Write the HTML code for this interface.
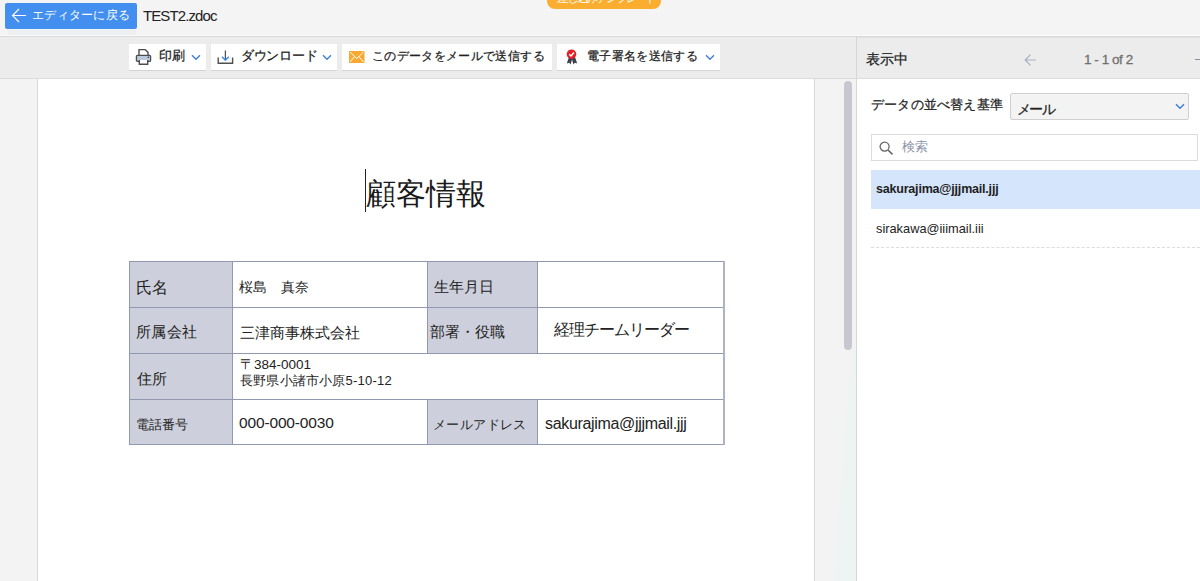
<!DOCTYPE html>
<html lang="ja"><head><meta charset="utf-8">
<style>
*{box-sizing:border-box;margin:0;padding:0}
html,body{width:1200px;height:581px;overflow:hidden;background:#f4f4f4;font-family:"Liberation Sans",sans-serif;color:#222}
div,span,svg{position:absolute}
.tx{white-space:nowrap;line-height:1}
.bd{-webkit-text-stroke:0.25px #222}
.btn{top:44px;height:26px;background:#fff;box-shadow:0 1px 0 rgba(0,0,0,.10)}
.hl{background:#9298b0}
</style></head><body>
<!-- top bar -->
<div style="left:0;top:0;width:1200px;height:36px;background:#f4f4f4"></div>
<div style="left:0;top:35px;width:1200px;height:1px;background:#fafafa"></div><div style="left:0;top:36px;width:1200px;height:1px;background:#dadada"></div>
<div style="left:5px;top:3px;width:132px;height:26px;background:#428ff0;border-radius:2px"></div>
<div style="left:8px;top:30px;width:128px;height:5px;background:#edf0f2"></div>
<svg style="left:11px;top:8px" width="16" height="15" viewBox="0 0 16 15"><path d="M8 1 L1.5 7.5 L8 14 M1.5 7.5 H15" fill="none" stroke="#fff" stroke-width="1.15"/></svg>
<div class="tx" style="left:32px;top:9px;font-size:12px;letter-spacing:0.3px;color:#fff">エディターに戻る</div>
<div class="tx" style="left:143px;top:8px;font-size:15px;letter-spacing:-0.9px;color:#222">TEST2.zdoc</div>
<div style="left:547px;top:-12px;width:114px;height:21px;background:#fbad2f;border-radius:0 0 8px 8px;overflow:hidden"><div class="tx" style="left:10px;top:4px;font-size:12px;letter-spacing:-2.2px;color:#fff7e6">差し込みテンプレート</div></div>

<!-- toolbar -->
<div style="left:0;top:37px;width:856px;height:41px;background:#ececec"></div>
<div style="left:0;top:78px;width:856px;height:1px;background:#dcdcdc"></div>
<div class="btn" style="left:129px;width:77px"></div>
<div class="btn" style="left:211px;width:126px"></div>
<div class="btn" style="left:342px;width:210px"></div>
<div class="btn" style="left:557px;width:163px"></div>
<svg style="left:135px;top:48px" width="17" height="18" viewBox="0 0 17 18"><path d="M4 7 V1.6 H10.2 L13 4.4 V7" fill="#fff" stroke="#4d4d4d" stroke-width="1.4"/><rect x="1.4" y="7.4" width="14.2" height="6" rx="1" fill="#b9c8da" stroke="#4d4d4d" stroke-width="1.25"/><path d="M4.3 12 V16.3 H12.7 V12" fill="#fff" stroke="#4d4d4d" stroke-width="1.4"/><circle cx="13.3" cy="9.3" r="0.8" fill="#333"/></svg>
<div class="tx bd" style="left:159px;top:50px;font-size:12.5px">印刷</div>
<svg style="left:191px;top:54px" width="10" height="7" viewBox="0 0 10 7"><path d="M1 1.2 L5 5.2 L9 1.2" fill="none" stroke="#3d7fd9" stroke-width="1.4"/></svg>
<svg style="left:217px;top:50px" width="17" height="15" viewBox="0 0 17 15"><path d="M1.2 7.5 V13.3 H15.6 V7.5" fill="none" stroke="#505050" stroke-width="1.4"/><path d="M8.4 0.5 V10" stroke="#555" stroke-width="1.3"/><path d="M5 6.8 L8.4 10.2 L11.8 6.8" fill="none" stroke="#3a8af2" stroke-width="1.5"/></svg>
<div class="tx bd" style="left:241px;top:50px;font-size:12.5px;letter-spacing:-0.3px">ダウンロード</div>
<svg style="left:322px;top:54px" width="10" height="7" viewBox="0 0 10 7"><path d="M1 1.2 L5 5.2 L9 1.2" fill="none" stroke="#3d7fd9" stroke-width="1.4"/></svg>
<svg style="left:349px;top:51px" width="16" height="12" viewBox="0 0 16 12"><rect x="0" y="0" width="15.5" height="12" fill="#f9a830"/><path d="M1 1 L7.75 7.5 L14.5 1 M1 11 L5.6 5.5 M14.5 11 L9.9 5.5" fill="none" stroke="#fff" stroke-width="1"/></svg>
<div class="tx bd" style="left:372px;top:50px;font-size:12px;letter-spacing:0.35px">このデータをメールで送信する</div>
<svg style="left:565px;top:49px" width="14" height="16" viewBox="0 0 14 16"><path d="M4 8 L1.8 14.5 L4.2 13.8 L5.6 15.5 L7 10.5 L8.4 15.5 L9.8 13.8 L12.2 14.5 L10 8 Z" fill="#3b404c"/><circle cx="6.5" cy="5.2" r="4.8" fill="#e0232b"/><path d="M4.2 5.3 L6 7 L9 3.6" fill="none" stroke="#fff" stroke-width="1.5"/></svg>
<div class="tx bd" style="left:587px;top:50px;font-size:12px;letter-spacing:0.35px">電子署名を送信する</div>
<svg style="left:705px;top:54px" width="10" height="7" viewBox="0 0 10 7"><path d="M1 1.2 L5 5.2 L9 1.2" fill="none" stroke="#3d7fd9" stroke-width="1.4"/></svg>

<!-- document area -->
<div style="left:0;top:79px;width:37px;height:502px;background:#f3f3f3"></div>
<div style="left:37px;top:79px;width:1px;height:502px;background:#d9d9d9"></div>
<div style="left:38px;top:79px;width:776px;height:502px;background:#fff"></div>
<div style="left:814px;top:79px;width:1px;height:502px;background:#d9d9d9"></div>
<div style="left:815px;top:79px;width:41px;height:502px;background:#f3f3f3"></div>
<svg style="left:815px;top:79px" width="41" height="502" viewBox="0 0 41 502"><polygon points="37,270 41,270 41,502 19,502" fill="#eef3f4"/></svg><div style="left:844px;top:81px;width:8px;height:269px;background:#c6c7cf;border-radius:4px"></div>

<div style="left:365px;top:169px;width:1px;height:43px;background:#222"></div>
<div class="tx" style="left:366px;top:179px;font-size:29.5px;color:#1a1a1a">顧客情報</div>

<!-- table -->
<div style="left:129px;top:261px;width:104px;height:184px;background:#cdd0dc"></div>
<div style="left:427px;top:261px;width:111px;height:93px;background:#cdd0dc"></div>
<div style="left:427px;top:399px;width:111px;height:46px;background:#cdd0dc"></div>
<div class="hl" style="left:129px;top:261px;width:596px;height:1px"></div>
<div class="hl" style="left:129px;top:307px;width:596px;height:1px"></div>
<div class="hl" style="left:129px;top:353px;width:596px;height:1px"></div>
<div class="hl" style="left:129px;top:399px;width:596px;height:1px"></div>
<div class="hl" style="left:129px;top:444px;width:596px;height:1px"></div>
<div class="hl" style="left:129px;top:261px;width:1px;height:184px"></div>
<div class="hl" style="left:232px;top:261px;width:1px;height:184px"></div>
<div class="hl" style="left:427px;top:261px;width:1px;height:93px"></div>
<div class="hl" style="left:427px;top:399px;width:1px;height:46px"></div>
<div class="hl" style="left:537px;top:261px;width:1px;height:93px"></div>
<div class="hl" style="left:537px;top:399px;width:1px;height:46px"></div>
<div style="left:723px;top:261px;width:2px;height:184px;background:#aeb2c5"></div>

<div class="tx" style="left:136px;top:280px;font-size:16px">氏名</div>
<div class="tx" style="left:239px;top:281px;font-size:13.5px">桜島　真奈</div>
<div class="tx" style="left:434px;top:279px;font-size:15.3px">生年月日</div>
<div class="tx" style="left:136px;top:324px;font-size:15.3px;letter-spacing:0.3px">所属会社</div>
<div class="tx" style="left:240px;top:325px;font-size:15px">三津商事株式会社</div>
<div class="tx" style="left:430px;top:324px;font-size:15px">部署・役職</div>
<div class="tx" style="left:554px;top:322px;font-size:16px;letter-spacing:-1.05px">経理チームリーダー</div>
<div class="tx" style="left:137px;top:371px;font-size:15.3px">住所</div>
<div class="tx" style="left:240px;top:358px;font-size:13.5px">〒384-0001</div>
<div class="tx" style="left:240px;top:374px;font-size:13px;letter-spacing:0.2px">長野県小諸市小原5-10-12</div>
<div class="tx" style="left:136px;top:418px;font-size:13px">電話番号</div>
<div class="tx" style="left:239px;top:415px;font-size:15.5px;letter-spacing:-0.15px">000-000-0030</div>
<div class="tx" style="left:433px;top:418px;font-size:13.4px;letter-spacing:0.4px">メールアドレス</div>
<div class="tx" style="left:545px;top:416px;font-size:16px;letter-spacing:-0.33px">sakurajima@jjjmail.jjj</div>

<!-- right panel -->
<div style="left:856px;top:37px;width:1px;height:544px;background:#d6d6d6"></div>
<div style="left:857px;top:37px;width:343px;height:41px;background:#ececec;border-top:1px solid #e0e0e0"></div>
<div style="left:857px;top:78px;width:343px;height:1px;background:#dcdcdc"></div>
<div style="left:857px;top:79px;width:343px;height:502px;background:#fff"></div>
<div class="tx bd" style="left:866px;top:52px;font-size:14px">表示中</div>
<svg style="left:1024px;top:54px" width="13" height="12" viewBox="0 0 13 12"><path d="M6.5 0.7 L1.2 6 L6.5 11.3 M1.2 6 H12" fill="none" stroke="#a9aec4" stroke-width="1.2"/></svg>
<div class="tx" style="left:1084px;top:53px;font-size:13.5px;color:#707070;-webkit-text-stroke:0.3px #707070;letter-spacing:-0.45px">1 - 1 of 2</div>
<div style="left:1195px;top:59px;width:5px;height:1.3px;background:#8a8ea8"></div>

<div class="tx bd" style="left:871px;top:98px;font-size:13.2px;letter-spacing:0.2px">データの並べ替え基準</div>
<div style="left:1010px;top:93px;width:179px;height:27px;background:#f3f3f3;border:1px solid #cfcfcf;border-radius:2px"></div>
<div class="tx bd" style="left:1017px;top:103px;font-size:13.5px;letter-spacing:-1.6px">メール</div>
<svg style="left:1175px;top:103px" width="10" height="7" viewBox="0 0 10 7"><path d="M1 1.2 L5 5.2 L9 1.2" fill="none" stroke="#3b7ad8" stroke-width="1.4"/></svg>

<div style="left:871px;top:134px;width:327px;height:27px;border:1px solid #dcdcdc;background:#fff"></div>
<svg style="left:879px;top:141px" width="16" height="14" viewBox="0 0 16 14"><circle cx="5.6" cy="5.6" r="4.5" fill="none" stroke="#666" stroke-width="1.3"/><path d="M9 9 L13.5 13.3" stroke="#666" stroke-width="1.6"/></svg>
<div class="tx" style="left:902px;top:141px;font-size:12.5px;color:#8a92a8">検索</div>

<div style="left:871px;top:170px;width:329px;height:39px;background:#d5e5fb"></div>
<div class="tx" style="left:876px;top:183px;font-size:12.5px;font-weight:bold;color:#1e1e1e;letter-spacing:-0.2px">sakurajima@jjjmail.jjj</div>
<div class="tx" style="left:876px;top:223px;font-size:12.8px;color:#222">sirakawa@iiimail.iii</div>
<div style="left:871px;top:247px;width:329px;height:0;border-top:1px dashed #dcdcdc"></div>
</body></html>
